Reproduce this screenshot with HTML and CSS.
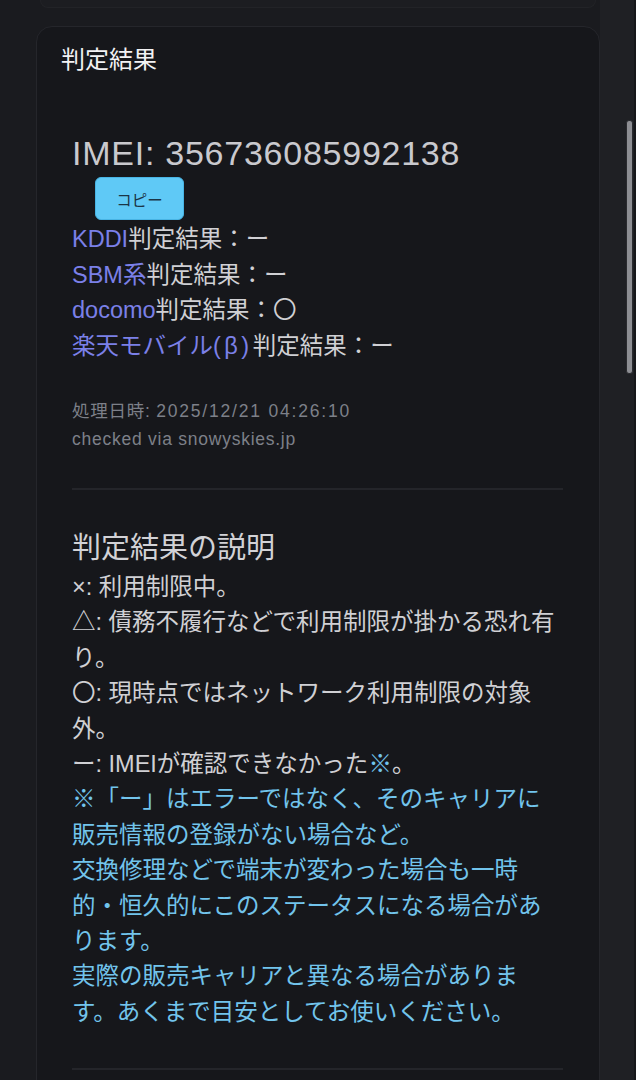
FILE: index.html
```html
<!DOCTYPE html>
<html lang="ja">
<head>
<meta charset="utf-8">
<title>判定結果</title>
<link rel="stylesheet" href="styles.css">
</head>
<body>
<div class="page">
  <div class="prev-card"></div>
  <section class="card">
    <h1 class="card-title">判定結果</h1>
    <div class="card-body">
      <div class="imei">IMEI: 356736085992138</div>
      <button class="copy-btn">コピー</button>
      <ul class="results">
        <li><span class="carrier">KDDI</span>判定結果：ー</li>
        <li><span class="carrier">SBM系</span>判定結果：ー</li>
        <li><span class="carrier">docomo</span>判定結果：〇</li>
        <li><span class="carrier">楽天モバイル<span class="paren">(β)</span></span>判定結果：ー</li>
      </ul>
      <div class="meta">
        <div>処理日時: <span class="stamp">2025/12/21 04:26:10</span></div>
        <div>checked via snowyskies.jp</div>
      </div>
      <hr class="divider">
      <h2 class="legend-title">判定結果の説明</h2>
      <div class="legend">
        <p>×: 利用制限中。</p>
        <p>△: 債務不履行などで利用制限が掛かる恐れ有り。</p>
        <p>〇: 現時点ではネットワーク利用制限の対象外。</p>
        <p>ー: IMEIが確認できなかった<span class="note-mark">※</span>。</p>
        <p class="note">※「ー」はエラーではなく、そのキャリアに販売情報の登録がない場合など。</p>
        <p class="note">交換修理などで端末が変わった場合も一時的・恒久的にこのステータスになる場合があります。</p>
        <p class="note">実際の販売キャリアと異なる場合がありま<br>す。あくまで目安としてお使いください。</p>
      </div>
      <hr class="divider">
    </div>
  </section>
  <div class="scroll-thumb"></div>
</div>
</body>
</html>
```

FILE: styles.css
```css
html, body {
  margin: 0;
  padding: 0;
}
body {
  background: linear-gradient(to right, #1a1b1f 0, #1a1b1f 600px, #1f2024 600px, #1f2024 634px, #16171a 634px);
  font-family: "Liberation Sans", "Noto Sans CJK JP", sans-serif;
  color: #d2d2d6;
  min-height: 1080px;
  overflow: hidden;
  text-spacing-trim: space-all;
}
.page {
  position: relative;
  width: 636px;
  height: 1080px;
  overflow: hidden;
}
.prev-card {
  margin: 0 40px 0 40px;
  height: 7px;
  border: 1px solid #222327;
  border-top: none;
  border-radius: 0 0 14px 14px;
  background: #1c1d21;
}
.card {
  margin: 18px 36px 0 36px;
  background: #16171b;
  border: 1px solid #25262b;
  border-radius: 16px;
  padding: 17px 0 0 24px;
  min-height: 1100px;
}
.card-title {
  margin: 0;
  font-size: 24px;
  line-height: 32px;
  font-weight: 400;
  color: #f2f2f4;
}
.card-body {
  margin: 55px 0 0 11px;
  width: 491px;
}
.imei {
  font-size: 34px;
  line-height: 44px;
  letter-spacing: 0.75px;
  color: #c9c9ce;
}
.copy-btn {
  display: block;
  margin: 2px 0 0 23px;
  width: 89px;
  height: 43px;
  background: #5fc9f6;
  border: 1px solid #48b4e4;
  border-radius: 6px;
  font-family: "Noto Sans CJK JP", sans-serif;
  font-size: 15.5px;
  color: #1b3546;
  padding: 0;
}
.results {
  list-style: none;
  margin: 2px 0 0 0;
  padding: 0;
  font-size: 23.5px;
  line-height: 35.5px;
  color: #d0d0d4;
}
.carrier {
  color: #7b80e8;
}
.paren {
  letter-spacing: 3.5px;
}
.meta {
  margin-top: 33px;
  font-size: 17.5px;
  line-height: 28px;
  letter-spacing: 0.75px;
  color: #7d8089;
}
.stamp {
  letter-spacing: 1.8px;
}
.divider {
  margin: 35px 0 0 0;
  border: none;
  height: 2px;
  background: #24252a;
}
.legend-title {
  margin: 38px 0 0 0;
  font-size: 29px;
  line-height: 40px;
  font-weight: 400;
  color: #d2d2d6;
}
.legend {
  margin-top: 2px;
  font-size: 23.5px;
  line-height: 35.4px;
  color: #d0d0d4;
}
.legend p {
  margin: 0;
}
.note, .note-mark {
  color: #72c4ec;
}
.legend + .divider {
  margin-top: 38px;
}
.scroll-thumb {
  position: absolute;
  left: 626px;
  top: 120px;
  width: 5px;
  height: 252px;
  background: #8d8e93;
  border: 1px solid #2a2b2f;
  border-radius: 3px;
}
```
